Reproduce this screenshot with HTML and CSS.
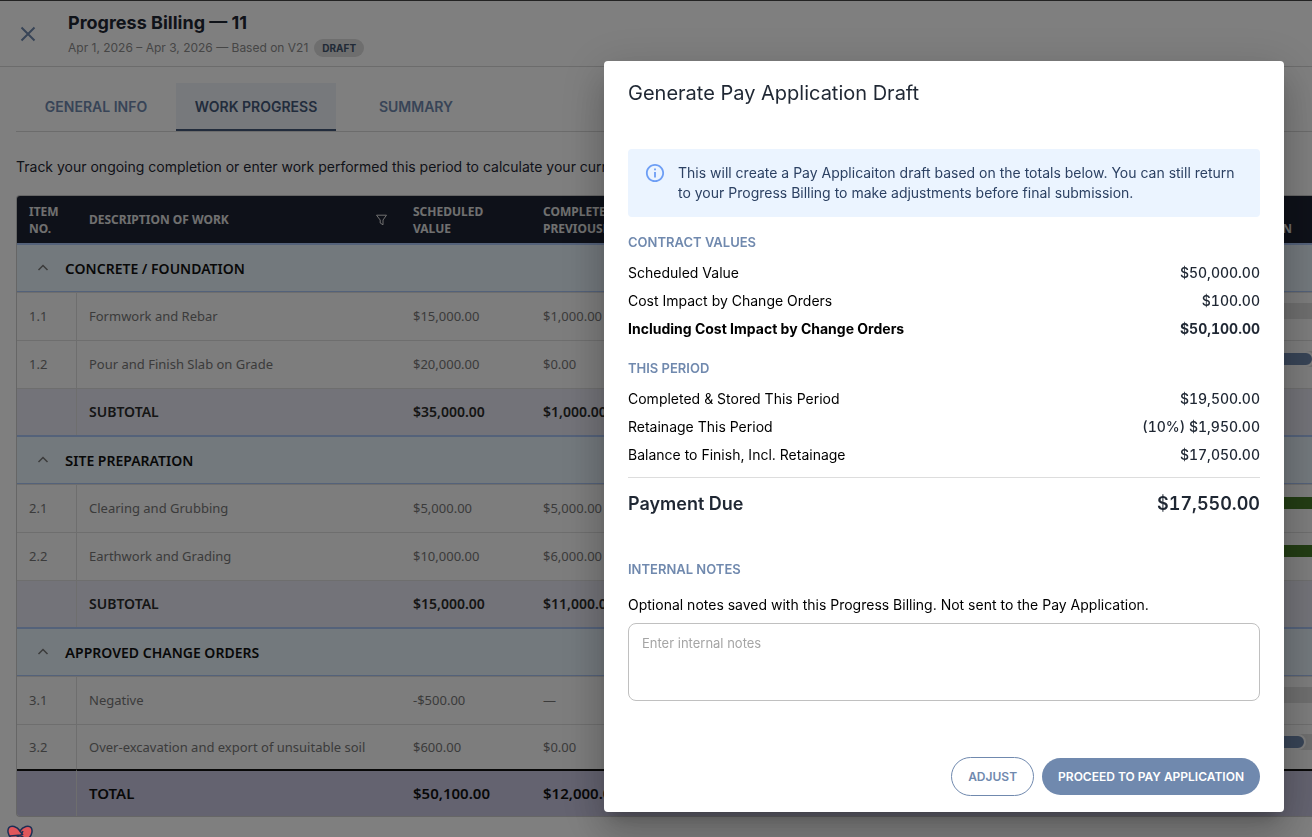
FILE: index.html
```html
<!DOCTYPE html>
<html lang="en">
<head>
  <meta charset="UTF-8">
  <title>Progress Billing</title>
  <link rel="stylesheet" href="styles.css">
</head>
<body>

  <header class="page-header">
    <button class="close-btn" aria-label="Close">
      <svg width="24" height="24" viewBox="0 0 24 24"><path d="M5.5 5.5l13 13M18.5 5.5l-13 13" fill="none" stroke="currentColor" stroke-width="2"/></svg>
    </button>
    <div>
      <h1>Progress Billing — 11</h1>
      <div class="sub">
        <span>Apr 1, 2026 – Apr 3, 2026 — Based on V21</span>
        <span class="chip">DRAFT</span>
      </div>
    </div>
  </header>

  <main>
    <nav class="tabs">
      <a href="#">GENERAL INFO</a>
      <a href="#" class="active">WORK PROGRESS</a>
      <a href="#">SUMMARY</a>
    </nav>

    <p class="intro">Track your ongoing completion or enter work performed this period to calculate your current payment.</p>

    <div class="table-wrap">
      <table class="work-table">
        <colgroup>
          <col class="col-no"><col class="col-desc"><col class="col-money"><col class="col-money"><col class="col-rest"><col class="col-bar">
        </colgroup>
        <thead>
          <tr>
            <th>ITEM NO.</th>
            <th>
              <div class="th-desc">
                DESCRIPTION OF WORK
                <svg width="14" height="12" viewBox="0 0 14 12"><path d="M1.500 1.200h10L8 6v4.800L5.200 9V6z" fill="none" stroke="currentColor"/></svg>
              </div>
            </th>
            <th>SCHEDULED VALUE</th>
            <th>COMPLETED PREVIOUSLY</th>
            <th></th>
            <th>WORK<br>COMPLETION</th>
          </tr>
        </thead>
        <tbody>
          <tr class="group">
            <td colspan="6">
              <div class="group-row">
                <svg width="12" height="12" viewBox="0 0 12 12"><path d="M1.5 8L6 3.500 10.500 8" fill="none" stroke="currentColor" stroke-width="1.500"/></svg>
                <div class="group-name">Concrete / foundation</div>
              </div>
            </td>
          </tr>
          <tr>
            <td>1.1</td><td>Formwork and Rebar</td><td>$15,000.00</td><td>$1,000.00</td><td></td>
            <td><div class="bar"><div class="fill" style="width: 7%"></div></div></td>
          </tr>
          <tr>
            <td>1.2</td><td>Pour and Finish Slab on Grade</td><td>$20,000.00</td><td>$0.00</td><td></td>
            <td><div class="bar"><div class="fill" style="width: 48%"></div></div></td>
          </tr>
          <tr class="subtotal">
            <td></td><td>SUBTOTAL</td><td>$35,000.00</td><td>$1,000.00</td><td></td><td></td>
          </tr>
          <tr class="group">
            <td colspan="6">
              <div class="group-row">
                <svg width="12" height="12" viewBox="0 0 12 12"><path d="M1.5 8L6 3.500 10.500 8" fill="none" stroke="currentColor" stroke-width="1.500"/></svg>
                <div class="group-name">Site preparation</div>
              </div>
            </td>
          </tr>
          <tr>
            <td>2.1</td><td>Clearing and Grubbing</td><td>$5,000.00</td><td>$5,000.00</td><td></td>
            <td><div class="bar"><div class="fill done" style="width: 100%"></div></div></td>
          </tr>
          <tr>
            <td>2.2</td><td>Earthwork and Grading</td><td>$10,000.00</td><td>$6,000.00</td><td></td>
            <td><div class="bar"><div class="fill done" style="width: 100%"></div></div></td>
          </tr>
          <tr class="subtotal">
            <td></td><td>SUBTOTAL</td><td>$15,000.00</td><td>$11,000.00</td><td></td><td></td>
          </tr>
          <tr class="group">
            <td colspan="6">
              <div class="group-row">
                <svg width="12" height="12" viewBox="0 0 12 12"><path d="M1.5 8L6 3.500 10.500 8" fill="none" stroke="currentColor" stroke-width="1.500"/></svg>
                <div class="group-name">Approved change orders</div>
              </div>
            </td>
          </tr>
          <tr>
            <td>3.1</td><td>Negative</td><td>-$500.00</td><td>—</td><td></td>
            <td><div class="bar"></div></td>
          </tr>
          <tr class="last">
            <td>3.2</td><td>Over-excavation and export of unsuitable soil</td><td>$600.00</td><td>$0.00</td><td></td>
            <td><div class="bar"><div class="fill" style="width: 44%"></div></div></td>
          </tr>
        </tbody>
        <tfoot>
          <tr>
            <td></td><td>TOTAL</td><td>$50,100.00</td><td>$12,000.00</td><td></td><td></td>
          </tr>
        </tfoot>
      </table>
    </div>
  </main>

  <div class="overlay">
    <div class="modal" role="dialog" aria-labelledby="modal-title">
      <h2 id="modal-title">Generate Pay Application Draft</h2>

      <div class="alert">
        <svg width="22" height="20" viewBox="1 1 22 22"><path d="M11 7h2v2h-2zm0 4h2v6h-2zm1-9C6.480 2 2 6.480 2 12s4.480 10 10 10 10-4.480 10-10S17.520 2 12 2zm0 18c-4.410 0-8-3.590-8-8s3.590-8 8-8 8 3.590 8 8-3.590 8-8 8z" fill="currentColor"/></svg>
        <p>This will create a Pay Applicaiton draft based on the totals below. You can still return to your Progress Billing to make adjustments before final submission.</p>
      </div>

      <h3>CONTRACT VALUES</h3>
      <dl>
        <div><dt>Scheduled Value</dt><dd>$50,000.00</dd></div>
        <div><dt>Cost Impact by Change Orders</dt><dd>$100.00</dd></div>
        <div class="strong"><dt>Including Cost Impact by Change Orders</dt><dd>$50,100.00</dd></div>
      </dl>

      <h3>THIS PERIOD</h3>
      <dl>
        <div><dt>Completed &amp; Stored This Period</dt><dd>$19,500.00</dd></div>
        <div><dt>Retainage This Period</dt><dd>(10%) $1,950.00</dd></div>
        <div><dt>Balance to Finish, Incl. Retainage</dt><dd>$17,050.00</dd></div>
        <div class="due"><dt>Payment Due</dt><dd>$17,550.00</dd></div>
      </dl>

      <h3 class="notes-title">INTERNAL NOTES</h3>
      <label for="notes">Optional notes saved with this Progress Billing. Not sent to the Pay Application.</label>
      <textarea id="notes" placeholder="Enter internal notes"></textarea>

      <div class="actions">
        <button class="btn outline">ADJUST</button>
        <button class="btn primary">PROCEED TO PAY APPLICATION</button>
      </div>
    </div>
  </div>

  <div class="helper">
    <svg width="26" height="24" viewBox="0 0 26 24">
      <path d="M13 6C10 1 4 0 2 2.500S1 10 4 13h18c3-3 4-8 2-10.500S16 1 13 6z" fill="#e0565b" stroke="#1d2f55" stroke-width="1.500"/>
      <path d="M3 11l11-1 2-4M13 6l3 4" fill="none" stroke="#1d2f55" stroke-width="1.500"/>
      <ellipse cx="13" cy="16" rx="5" ry="5" fill="#b9a850" stroke="#1d2f55" stroke-width="1.500"/>
    </svg>
  </div>

</body>
</html>
```

FILE: styles.css
```css
* {
  box-sizing: border-box;
}

body {
  margin: 0;
  height: 100vh;
  overflow: hidden;
  font-family: Inter, sans-serif;
  font-size: 14px;
  color: #1f2733;
  background: #fff;
}

h1, h2, h3, p, dl, dd {
  margin: 0;
}

button {
  font-family: inherit;
  cursor: pointer;
}

svg {
  display: block;
  flex-shrink: 0;
}

/* Page header */
.page-header {
  display: flex;
  align-items: center;
  gap: 28px;
  height: 67px;
  padding: 0 16px;
  border-top: 1px solid #444;
  border-bottom: 1px solid #d8d8d8;
}

.close-btn {
  display: flex;
  padding: 0;
  border: none;
  background: none;
  color: #7089ae;
}

.page-header h1 {
  padding-top: 2px;
  font-size: 18px;
  font-weight: 700;
  line-height: 26px;
}

.sub {
  display: flex;
  align-items: center;
  gap: 6px;
  line-height: 24px;
  font-size: 12px;
  color: #8c8c8c;
}

.chip {
  padding: 0 8px;
  border-radius: 9px;
  background: #dcdcdc;
  color: #42546e;
  font-size: 10px;
  font-weight: 700;
  line-height: 18px;
}

main {
  padding: 16px 0 0 16px;
}

.tabs {
  display: flex;
  border-bottom: 1px solid #d8d8d8;
}

.tabs a {
  width: 160px;
  height: 48px;
  line-height: 48px;
  text-align: center;
  text-decoration: none;
  font-size: 14px;
  font-weight: 600;
  color: #7089ae;
}

.tabs .active {
  background: #eff3f8;
  border-bottom: 2px solid #445878;
  color: #445878;
}

.intro {
  margin: 24px 0 18px;
  line-height: 21px;
  white-space: nowrap;
}

/* Work table */
.table-wrap {
  overflow: hidden;
  border: 1px solid #ccc;
  border-right: none;
  border-radius: 4px 0 0 4px;
}

.work-table {
  width: 1420px;
  table-layout: fixed;
  border-collapse: separate;
  border-spacing: 0;
  font-family: "Noto Sans", sans-serif;
  font-size: 13px;
  color: #777;
}

.col-no { width: 60px; }
.col-desc { width: 324px; }
.col-money { width: 130px; }
.col-rest { width: 539px; }

.work-table th {
  height: 47px;
  padding: 0 12px;
  background: #1c2232;
  color: #e0e0e0;
  font-size: 12px;
  font-weight: 700;
  line-height: 17px;
  text-align: left;
}

.th-desc {
  display: flex;
  justify-content: space-between;
  align-items: center;
}

.work-table td {
  height: 48px;
  padding: 0 12px 2px;
  background: #fafafa;
  border-top: 1px solid #ddd;
}

.work-table td:first-child {
  border-right: 1px solid #ddd;
}

.work-table .group td {
  height: 49px;
  padding-bottom: 0;
  border-top: 2px solid #a9c4f5;
  border-bottom: 1px solid #a9c4f5;
  border-right: none;
  background: #e7f2fa;
}

.group-row {
  display: flex;
  align-items: center;
  gap: 16px;
  padding-left: 8px;
}

.group-name {
  color: #111;
  font-size: 14px;
  font-weight: 600;
  line-height: 24px;
  text-transform: uppercase;
}

.group-name::first-letter {
  font-size: 15px;
}

.work-table .subtotal td {
  height: 47px;
  background: #e7e7f2;
  color: #2b2b2b;
  font-size: 14px;
  font-weight: 600;
}

.work-table .last td {
  height: 45px;
  padding-bottom: 0;
}

.work-table tfoot td {
  height: 47px;
  border-top: 2px solid #111;
  background: #c8c6e0;
  color: #111;
  font-size: 15px;
  font-weight: 600;
}

.bar {
  height: 16px;
  margin-bottom: 10px;
  background: #dedede;
}

.fill {
  height: 16px;
  border: 2px solid #fafafa;
  border-radius: 8px;
  background: #7089ae;
}

.fill.done {
  background: #467a28;
}

/* Modal */
.overlay {
  position: fixed;
  inset: 0;
  display: flex;
  justify-content: flex-end;
  align-items: flex-start;
  padding: 61px 28px 24px;
  background: rgba(0, 0, 0, 0.5);
}

.modal {
  width: 680px;
  padding: 16px 24px;
  border-radius: 4px;
  background: #fff;
  box-shadow: 0 11px 15px -7px rgba(0,0,0,0.2), 0 24px 38px 3px rgba(0,0,0,0.14), 0 9px 46px 8px rgba(0,0,0,0.12);
}

.modal h2 {
  margin-bottom: 40px;
  font-size: 20px;
  font-weight: 400;
  line-height: 32px;
}

.alert {
  display: flex;
  gap: 12px;
  padding: 14px 16px;
  border-radius: 4px;
  background: #ebf4ff;
  color: #2c4163;
  line-height: 20px;
}

.alert svg {
  color: #6d9ef5;
}

.modal h3 {
  margin-top: 16px;
  margin-bottom: 8px;
  font-size: 13px;
  font-weight: 600;
  line-height: 18px;
  color: #7089ae;
}

.modal dl div {
  display: flex;
  justify-content: space-between;
  line-height: 28px;
}

.modal dt {
  color: #000;
}

.modal dd {
  font-weight: 500;
  font-variant-numeric: tabular-nums;
}

.modal .strong dt,
.modal .strong dd {
  font-weight: 700;
}

.modal .due {
  margin-top: 8px;
  padding-top: 12px;
  border-top: 1px solid #ddd;
  font-size: 18px;
}

.modal .due dt,
.modal .due dd {
  color: #1f2733;
  font-weight: 600;
}

.modal .notes-title {
  margin-top: 42px;
  margin-bottom: 16px;
}

.modal label {
  display: block;
  line-height: 22px;
  color: #000;
}

.modal textarea {
  display: block;
  width: 100%;
  height: 78px;
  margin-top: 7px;
  padding: 10px 13px;
  border: 1px solid #c0c0c0;
  border-radius: 8px;
  font-family: inherit;
  font-size: 13px;
  line-height: 18px;
  resize: none;
}

.modal textarea::placeholder {
  color: #a5a5a5;
}

.actions {
  display: flex;
  justify-content: flex-end;
  align-items: center;
  gap: 8px;
  margin-top: 56px;
}

.btn {
  height: 37px;
  padding: 0 16px;
  border: none;
  border-radius: 20px;
  font-size: 12px;
  font-weight: 600;
}

.btn.outline {
  height: 39px;
  border: 1px solid #7089ae;
  background: #fff;
  color: #7089ae;
}

.btn.primary {
  background: #7089ae;
  color: #fff;
}

/* Helper icon peeking over the bottom edge */
.helper {
  position: fixed;
  left: 7px;
  bottom: -12px;
}
```
